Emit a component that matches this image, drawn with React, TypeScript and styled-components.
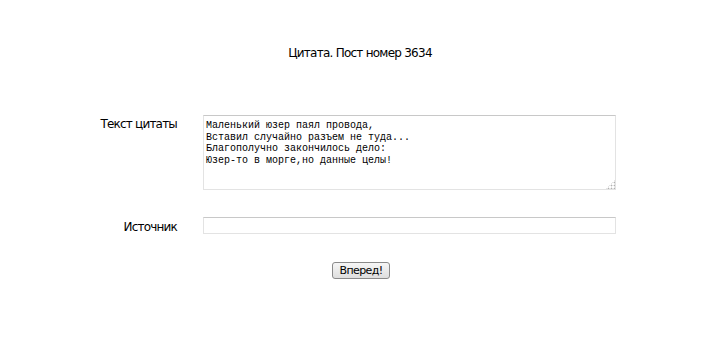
import React from "react";
import styled, { createGlobalStyle } from "styled-components";

const GlobalStyle = createGlobalStyle`
  body {
    margin: 0;
    background: #fff;
    font-family: "DejaVu Sans", "Liberation Sans", sans-serif;
    color: #000;
  }
`;

const Page = styled.div`
  width: 720px;
  padding-top: 46px;
`;

const Title = styled.h1`
  margin: 0 0 55px;
  font-size: 12px;
  font-weight: normal;
  text-align: center;
  letter-spacing: -0.75px;
`;

const Form = styled.form`
  display: grid;
  grid-template-columns: 177px 413px;
  column-gap: 26px;
  row-gap: 27px;
  align-items: start;
`;

const Label = styled.label<{ middle?: boolean }>`
  font-size: 12px;
  text-align: right;
  letter-spacing: -0.8px;
  padding-top: ${(p) => (p.middle ? "3px" : "2px")};
`;

const QuoteArea = styled.textarea`
  box-sizing: border-box;
  width: 413px;
  height: 75px;
  margin: 0;
  padding: 4px 2px 2px;
  font-family: "Liberation Mono", "Courier New", monospace;
  font-size: 10px;
  line-height: 11.7px;
  color: #000;
  border: 1px solid #e3e3e3;
  border-top-color: #c8c8c8;
  resize: both;
  outline: none;

  &::-webkit-resizer {
    background:
      linear-gradient(135deg, #fff 0 68%, transparent 68%),
      radial-gradient(circle, #b0b0b0 0.8px, transparent 1.1px) 1px 1px / 3px 3px,
      #fff;
  }
`;

const SourceInput = styled.input`
  box-sizing: border-box;
  width: 413px;
  height: 17px;
  margin: 0;
  padding: 1px 2px;
  border: 1px solid #e3e3e3;
  border-top-color: #c8c8c8;
  outline: none;
`;

const Actions = styled.div`
  display: flex;
  justify-content: center;
  padding-top: 28px;
  padding-left: 2px;
`;

const Submit = styled.button`
  box-sizing: border-box;
  height: 17px;
  padding: 0 6px;
  font-family: "DejaVu Sans", "Liberation Sans", sans-serif;
  font-size: 11px;
  letter-spacing: -0.6px;
  color: #000;
  border: 1px solid #8a8a8a;
  border-radius: 3px;
  background: linear-gradient(#f6f6f6, #dedede);
  line-height: 15px;
`;

const quote = `Маленький юзер паял провода,
Вставил случайно разъем не туда...
Благополучно закончилось дело:
Юзер-то в морге,но данные целы!`;

const App: React.FC = () => {
  return (
    <Page>
      <GlobalStyle />
      <Title>Цитата. Пост номер 3634</Title>
      <Form onSubmit={(e) => e.preventDefault()}>
        <Label>Текст цитаты</Label>
        <QuoteArea defaultValue={quote} spellCheck={false} />
        <Label middle>Источник</Label>
        <SourceInput type="text" />
      </Form>
      <Actions>
        <Submit type="submit">Вперед!</Submit>
      </Actions>
    </Page>
  );
};

export default App;
